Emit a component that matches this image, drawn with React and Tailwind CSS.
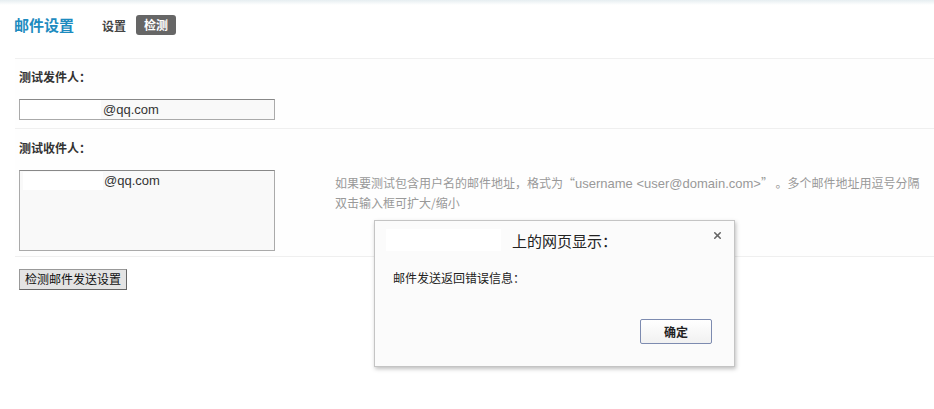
import { X } from 'lucide-react'

const font = { fontFamily: '"Noto Sans CJK SC", "Liberation Sans", sans-serif' }
const latin = { fontFamily: '"Liberation Sans", "Noto Sans CJK SC", sans-serif' }

function AlertDialog() {
  return (
    <div className="absolute left-[374px] top-[220px] w-[361px] h-[147px] bg-[#fbfbfb] border border-[#c4c4c4] shadow-[1px_2px_4px_rgba(0,0,0,0.25)]">
      <div className="relative h-[40px] flex items-center">
        <div className="absolute left-[11px] top-[8px] w-[115px] h-[22px] bg-white" />
        <span className="relative ml-[137px] mt-[1px] text-[15px] text-[#222]">上的网页显示：</span>
        <X size={11} strokeWidth={3.5} className="absolute right-[11px] top-[9px] text-[#666]" />
      </div>
      <div className="pl-[18px] pt-[9px] text-[12px] text-[#222] leading-[16px]">邮件发送返回错误信息：</div>
      <div className="flex justify-end pr-[22px] mt-[33px]">
        <button className="w-[72px] h-[25px] border border-[#7d8bb0] bg-gradient-to-b from-white to-[#f1f1f1] text-[12px] font-bold text-[#222] rounded-[2px]">
          确定
        </button>
      </div>
    </div>
  )
}

export default function App() {
  return (
    <div className="relative w-[934px] h-[409px] bg-white overflow-hidden" style={font}>
      <div className="h-[5px] bg-gradient-to-b from-[#e6eef1] to-white" />

      {/* 标题栏 */}
      <div className="h-[53px] flex items-start pt-[9px] pl-[14px]">
        <span className="text-[15px] font-bold text-[#1d8bbf] leading-[22px]">邮件设置</span>
        <span className="ml-[28px] text-[12px] font-bold text-[#444] leading-[22px] mt-[1px]">设置</span>
        <span className="ml-[10px] px-[8px] h-[20px] rounded-[3px] bg-[#666] text-white text-[12px] font-bold leading-[20px] mt-[1px]">检测</span>
      </div>

      <div className="ml-[15px] border-t border-[#f0f0f0]">
        {/* 发件人 */}
        <div className="pl-[4px] pt-[9px] pb-[8px] border-b border-[#efefef] bg-[#fefefe]">
          <div className="text-[12px] font-bold text-[#333] leading-[18px]">测试发件人：</div>
          <div className="mt-[13px] w-[256px] h-[21px] border border-[#aaa] border-t-[#888] bg-[#f9f9f9] flex items-center text-[13px] text-[#333]" style={latin}>
            <span className="w-[81px] h-[19px] bg-white" />
            <span className="ml-[2px]">@qq.com</span>
          </div>
        </div>

        {/* 收件人 */}
        <div className="pl-[4px] pt-[10px] pb-[5px] border-b border-[#efefef] bg-[#fefefe]">
          <div className="text-[12px] font-bold text-[#333] leading-[18px]">测试收件人：</div>
          <div className="mt-[13px] flex">
            <div className="w-[256px] h-[81px] border border-[#aaa] border-t-[#888] bg-[#f9f9f9] text-[13px] text-[#333]" style={latin}>
              <div className="flex items-center">
                <span className="w-[80px] h-[18px] bg-white ml-[3px]" />
                <span className="ml-[1px]">@qq.com</span>
              </div>
            </div>
            <div className="ml-[60px] mt-[3px] text-[12px] text-[#999] leading-[19px]">
              <div>
                如果要测试包含用户名的邮件地址，格式为“<span className="text-[13px]" style={latin}>username &lt;user@domain.com&gt;</span>” 。多个邮件地址用逗号分隔
              </div>
              <div>双击输入框可扩大/缩小</div>
            </div>
          </div>
        </div>

        <div className="pl-[4px] pt-[8px]">
          <button className="h-[21px] px-[5px] border border-[#999] border-r-[#666] border-b-[#666] bg-[#e4e4e4] text-[12px] text-[#111] leading-[18px]">
            检测邮件发送设置
          </button>
        </div>
      </div>

      <AlertDialog />
    </div>
  )
}
